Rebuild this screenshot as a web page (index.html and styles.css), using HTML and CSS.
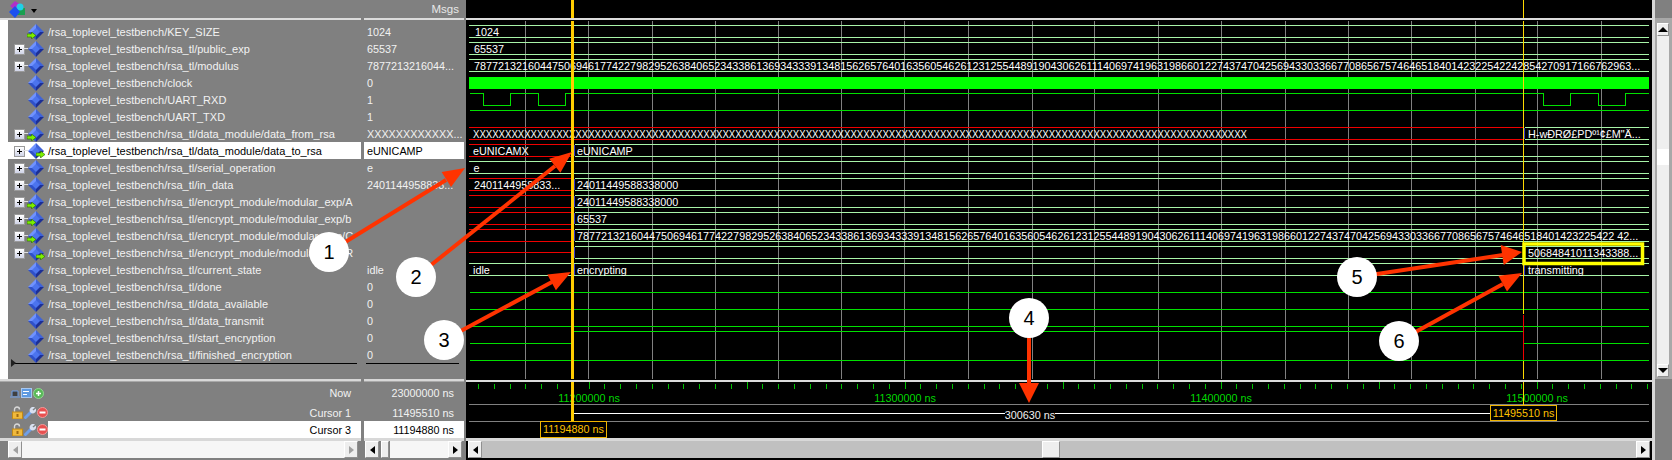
FILE: index.html
```html
<!DOCTYPE html>
<html lang="en">
<head>
<meta charset="utf-8">
<title>Wave</title>
<link rel="stylesheet" href="styles.css">
</head>
<body>
<svg class="defs" width="0" height="0" aria-hidden="true">
  <defs>
    <symbol id="dia" viewBox="0 0 16 16">
      <polygon points="8,0 16,8 8,8" fill="#3f63d8"/>
      <polygon points="8,0 0,8 8,8" fill="#6f92ff"/>
      <polygon points="0,8 8,16 8,8" fill="#2f50c8"/>
      <polygon points="16,8 8,16 8,8" fill="#1c2f96"/>
      <polygon points="8,4 12,8 8,12 4,8" fill="#4c74ee"/>
    </symbol>
    <symbol id="arr" viewBox="0 0 9 7">
      <polygon points="0,2 4.5,2 4.5,0 9,3.5 4.5,7 4.5,5 0,5" fill="#7cf000" stroke="#2a6a00" stroke-width=".6"/>
    </symbol>
    <symbol id="lock" viewBox="0 0 11 13">
      <path d="M2.5 6V3.5a2.5 2.5 0 0 1 5 0" fill="none" stroke="#d8d8d8" stroke-width="1.4"/>
      <rect x=".5" y="6" width="10" height="7" fill="#f0b93c" stroke="#c08a18"/>
      <rect x="4.5" y="8" width="2" height="3" fill="#a06c10"/>
    </symbol>
    <symbol id="wrench" viewBox="0 0 12 12">
      <path d="M1.5 10.5L7.500 4.500" stroke="#6f9fe8" stroke-width="3" stroke-linecap="round"/>
      <path d="M6 5a3.500 3.500 0 0 1 5-4.500L8.500 2.500l1 1L11.800 1.500a3.500 3.500 0 0 1-4.800 4.500z" fill="#d8e0f0"/>
    </symbol>
    <symbol id="minus" viewBox="0 0 11 11">
      <circle cx="5.500" cy="5.500" r="5" fill="#e85050" stroke="#f09a9a"/>
      <rect x="2.500" y="4.500" width="6" height="2" fill="#fff"/>
    </symbol>
  </defs>
</svg>

<div class="app">
  <section class="col names">
    <header class="head">
      <svg class="logo" width="18" height="17" viewBox="0 0 18 17" role="img" aria-label="wave">
        <rect x="8" y="7" width="8" height="7" fill="#1aa050"/>
        <polygon points="6,0 12,4 6,9 1,5" fill="#b030c8"/>
        <circle cx="11" cy="6" r="3.500" fill="#20d0e8"/>
        <polygon points="6,5 11,11 6,17 0,11" fill="#1c50f0"/>
      </svg>
      <i class="drop"></i>
    </header>
    <div class="sep"></div>
    <div class="list">
      <div class="row"><i class="tw"></i><span class="ic"><svg class="d"><use href="#dia"/></svg><svg class="ai"><use href="#arr"/></svg></span><span>/rsa_toplevel_testbench/KEY_SIZE</span></div>
      <div class="row"><i class="tw plus"></i><span class="ic"><svg class="d"><use href="#dia"/></svg></span><span>/rsa_toplevel_testbench/rsa_tl/public_exp</span></div>
      <div class="row"><i class="tw plus"></i><span class="ic"><svg class="d"><use href="#dia"/></svg></span><span>/rsa_toplevel_testbench/rsa_tl/modulus</span></div>
      <div class="row"><i class="tw"></i><span class="ic"><svg class="d"><use href="#dia"/></svg></span><span>/rsa_toplevel_testbench/clock</span></div>
      <div class="row"><i class="tw"></i><span class="ic"><svg class="d"><use href="#dia"/></svg></span><span>/rsa_toplevel_testbench/UART_RXD</span></div>
      <div class="row"><i class="tw"></i><span class="ic"><svg class="d"><use href="#dia"/></svg></span><span>/rsa_toplevel_testbench/UART_TXD</span></div>
      <div class="row"><i class="tw plus"></i><span class="ic"><svg class="d"><use href="#dia"/></svg><svg class="ai"><use href="#arr"/></svg></span><span>/rsa_toplevel_testbench/rsa_tl/data_module/data_from_rsa</span></div>
      <div class="row sel"><i class="tw plus"></i><span class="ic"><svg class="d"><use href="#dia"/></svg><svg class="ao"><use href="#arr"/></svg></span><span>/rsa_toplevel_testbench/rsa_tl/data_module/data_to_rsa</span></div>
      <div class="row"><i class="tw plus"></i><span class="ic"><svg class="d"><use href="#dia"/></svg></span><span>/rsa_toplevel_testbench/rsa_tl/serial_operation</span></div>
      <div class="row"><i class="tw plus"></i><span class="ic"><svg class="d"><use href="#dia"/></svg></span><span>/rsa_toplevel_testbench/rsa_tl/in_data</span></div>
      <div class="row"><i class="tw plus"></i><span class="ic"><svg class="d"><use href="#dia"/></svg><svg class="ai"><use href="#arr"/></svg></span><span>/rsa_toplevel_testbench/rsa_tl/encrypt_module/modular_exp/A</span></div>
      <div class="row"><i class="tw plus"></i><span class="ic"><svg class="d"><use href="#dia"/></svg><svg class="ai"><use href="#arr"/></svg></span><span>/rsa_toplevel_testbench/rsa_tl/encrypt_module/modular_exp/b</span></div>
      <div class="row"><i class="tw plus"></i><span class="ic"><svg class="d"><use href="#dia"/></svg><svg class="ai"><use href="#arr"/></svg></span><span>/rsa_toplevel_testbench/rsa_tl/encrypt_module/modular_exp/C</span></div>
      <div class="row"><i class="tw plus"></i><span class="ic"><svg class="d"><use href="#dia"/></svg><svg class="ao"><use href="#arr"/></svg></span><span>/rsa_toplevel_testbench/rsa_tl/encrypt_module/modular_exp/R</span></div>
      <div class="row"><i class="tw"></i><span class="ic"><svg class="d"><use href="#dia"/></svg></span><span>/rsa_toplevel_testbench/rsa_tl/current_state</span></div>
      <div class="row"><i class="tw"></i><span class="ic"><svg class="d"><use href="#dia"/></svg></span><span>/rsa_toplevel_testbench/rsa_tl/done</span></div>
      <div class="row"><i class="tw"></i><span class="ic"><svg class="d"><use href="#dia"/></svg></span><span>/rsa_toplevel_testbench/rsa_tl/data_available</span></div>
      <div class="row"><i class="tw"></i><span class="ic"><svg class="d"><use href="#dia"/></svg></span><span>/rsa_toplevel_testbench/rsa_tl/data_transmit</span></div>
      <div class="row"><i class="tw"></i><span class="ic"><svg class="d"><use href="#dia"/></svg></span><span>/rsa_toplevel_testbench/rsa_tl/start_encryption</span></div>
      <div class="row"><i class="tw"></i><span class="ic"><svg class="d"><use href="#dia"/></svg></span><span>/rsa_toplevel_testbench/rsa_tl/finished_encryption</span></div>
      <div class="endline"><i class="endmark"></i></div>
    </div>
    <div class="sep2"></div>
    <div class="cursors">
      <div class="crow now">
        <span class="tools">
          <svg width="10" height="10" viewBox="0 0 10 10"><path d="M0 9h10M2 8V3h6v5" fill="#404040" stroke="#6f9fe8"/></svg>
          <svg width="11" height="11" viewBox="0 0 11 11"><rect x=".5" y=".5" width="10" height="9" fill="#5f9ae0" stroke="#a8c8f0"/><rect x="2" y="3" width="6" height="1" fill="#fff"/><rect x="2" y="6" width="4" height="1" fill="#fff"/></svg>
          <svg width="11" height="11" viewBox="0 0 11 11"><circle cx="5.500" cy="5.500" r="5" fill="#58b858" stroke="#90d890"/><path d="M3 5.500h5M5.500 3v5" stroke="#fff" stroke-width="1.500"/></svg>
        </span>
        <span class="clabel">Now</span>
      </div>
      <div class="crow">
        <span class="tools"><svg class="tl"><use href="#lock"/></svg><svg class="tw2"><use href="#wrench"/></svg><svg class="tm"><use href="#minus"/></svg></span>
        <span class="clabel">Cursor 1</span>
      </div>
      <div class="crow">
        <span class="tools"><svg class="tl"><use href="#lock"/></svg><svg class="tw2"><use href="#wrench"/></svg><svg class="tm"><use href="#minus"/></svg></span>
        <span class="clabel on">Cursor 3</span>
      </div>
    </div>
    <div class="sep3"></div>
    <div class="hs hs-names"><b class="btn"><i class="la off"></i></b><span class="track"></span><b class="btn"><i class="ra off"></i></b></div>
  </section>

  <section class="col vals">
    <header class="head msgs">Msgs</header>
    <div class="sep"></div>
    <div class="list vlist">
      <div class="vrow">1024</div>
      <div class="vrow">65537</div>
      <div class="vrow">7877213216044...</div>
      <div class="vrow">0</div>
      <div class="vrow">1</div>
      <div class="vrow">1</div>
      <div class="vrow">XXXXXXXXXXXX...</div>
      <div class="vrow sel">eUNICAMP</div>
      <div class="vrow">e</div>
      <div class="vrow">2401144958833...</div>
      <div class="vrow"></div>
      <div class="vrow"></div>
      <div class="vrow"></div>
      <div class="vrow"></div>
      <div class="vrow">idle</div>
      <div class="vrow">0</div>
      <div class="vrow">0</div>
      <div class="vrow">0</div>
      <div class="vrow">0</div>
      <div class="vrow">0</div>
      <div class="endline"></div>
    </div>
    <div class="sep2"></div>
    <div class="cursors">
      <div class="crow now vc">23000000 ns</div>
      <div class="crow vc">11495510 ns</div>
      <div class="crow vc on">11194880 ns</div>
    </div>
    <div class="sep3"></div>
    <div class="hs hs-vals"><b class="btn"><i class="la"></i></b><b class="thumb"></b><span class="track"></span><b class="btn"><i class="ra"></i></b></div>
  </section>

  <section class="col wave">
    <svg class="canvas" width="1186" height="438" viewBox="466 0 1186 438" role="img" aria-label="waveform">
      <defs><clipPath id="wc"><rect x="469" y="21" width="1180" height="358"/></clipPath></defs>
      <path class="sepline" d="M466 19H1652M466 380.500H1652"/>
      <path class="grid" d="M525.500 21V379M588.500 21V379M652.500 21V379M715.500 21V379M778.500 21V379M841.500 21V379M904.500 21V379M968.500 21V379M1032.500 21V379M1094.500 21V379M1158.500 21V379M1221.500 21V379M1285.500 21V379M1348.500 21V379M1411.500 21V379M1475.500 21V379M1537.500 21V379M1601.500 21V379"/>
      <path class="bus" d="M469 25.500H1649M469 37.500H1649M469 42.500H1649M469 54.500H1649M469 59.500H1649M469 71.500H1649M1525 127.500H1649M1525 139.500H1649M575 144.500H1649M575 156.500H1649M469 161.500H1649M469 173.500H1649M575 178.500H1649M575 190.500H1649M575 195.500H1649M575 207.500H1649M575 212.500H1649M575 224.500H1649M575 229.500H1649M575 241.500H1649M575 246.500H1649M575 258.500H1649M469 263.500H1649M469 275.500H1649"/>
      <path class="xs" d="M469 127.500H1523M469 139.500H1523M469 144.500H571M469 156.500H571M469 178.500H571M469 190.500H571M469 195.500H571M469 207.500H571M469 212.500H571M469 224.500H571M469 229.500H571M469 241.500H571M469 252.500H571"/>
      <rect class="clk" x="469" y="77" width="1180" height="12"/>
      <path class="sig" d="M470 93.500H483.500V105.500H510.500V93.500H538.500V105.500H565.500V93.500H1543.500V105.500H1570.500V93.500H1598.500V105.500H1625.500V93.500H1649M470 110.500H1649M470 292.500H1649M470 309.500H1649M470 326.500H1649M470 343.500H573V331.500H1523V343.500H1649M470 360.500H1649"/>
      <g class="vt" clip-path="url(#wc)">
        <text x="475" y="36">1024</text>
        <text x="474" y="53">65537</text>
        <text x="474" y="70">7877213216044750694617742279829526384065234338613693433391348156265764016356054626123125544891904306261114069741963198660122743747042569433033667708656757464651840142322542242854270917166762963...</text>
        <text x="473" y="138" textLength="774" lengthAdjust="spacingAndGlyphs">XXXXXXXXXXXXXXXXXXXXXXXXXXXXXXXXXXXXXXXXXXXXXXXXXXXXXXXXXXXXXXXXXXXXXXXXXXXXXXXXXXXXXXXXXXXXXXXXXXXXXXXXXXXXXXXXXXXXXXXXX</text>
        <text x="1528" y="138">H-wÐRØ£PDº¹¢£M"Ä...</text>
        <text x="473" y="155">eUNICAMX</text>
        <text x="577" y="155">eUNICAMP</text>
        <text x="473.500" y="172">e</text>
        <text x="474" y="189">2401144958833...</text>
        <text x="577" y="189">24011449588338000</text>
        <text x="577" y="206">24011449588338000</text>
        <text x="577" y="223">65537</text>
        <text x="577" y="240">78772132160447506946177422798295263840652343386136934333913481562657640163560546261231255448919043062611140697419631986601227437470425694330336677086567574646518401423225422 42...</text>
        <text x="1528" y="257">50684841011343388...</text>
        <text x="473" y="274">idle</text>
        <text x="577" y="274">encrypting</text>
        <text x="1528" y="274">transmitting</text>
      </g>
      <path class="edge" d="M574.500 145V156M574.500 179V190M574.500 196V207M574.500 213V224M574.500 230V241M574.500 247V258M574.500 264V275M1524.500 128V139M1524.500 264V275"/>
      <path class="glitch" d="M1523.500 78V89M572.500 282V292M572.500 299V309M572.500 316V326M572.500 332V343M572.500 350V360M1523.500 315V360"/>
      <line class="tick" x1="478" y1="386.500" x2="1649" y2="386.500"/>
      <line class="major" x1="589" y1="385.500" x2="1649" y2="385.500"/>
      <path class="rule" d="M469 404.500H1649M469 421.500H1649"/>
      <g class="rt">
        <text x="589" y="402">11200000 ns</text>
        <text x="905" y="402">11300000 ns</text>
        <text x="1221" y="402">11400000 ns</text>
        <text x="1537" y="402">11500000 ns</text>
      </g>
      <path class="cur3" d="M572.500 0V18M572.500 21V379M572.500 382V421"/>
      <path class="cur1" d="M1523.500 0V18M1523.500 21V314M1523.500 361V379M1523.500 382V405"/>
      <path class="span" d="M574 413.500H1490"/>
      <rect class="spanbg" x="1005" y="407" width="50" height="13"/>
      <text class="spant" x="1030" y="419">300630 ns</text>
      <rect class="cbox" x="1490.500" y="405.500" width="66" height="15"/>
      <text class="ctext" x="1523.500" y="417">11495510 ns</text>
      <rect class="cbox" x="540.500" y="421.500" width="66" height="16"/>
      <text class="ctext" x="573.500" y="433">11194880 ns</text>
    </svg>
    <div class="sep3"></div>
    <div class="hs hs-wave"><b class="btn"><i class="la"></i></b><span class="gtrack"></span><b class="thumb big"></b><span class="gtrack"></span><b class="btn"><i class="ra"></i></b></div>
  </section>

  <aside class="col vs">
    <div class="vs-head"></div>
    <div class="vs-bar">
      <b class="vbtn"><i class="ua"></i></b>
      <span class="vtrack"></span>
      <b class="vthumb"></b>
      <span class="vtrack"></span>
      <b class="vbtn"><i class="da"></i></b>
    </div>
    <div class="vs-foot"></div>
  </aside>
</div>

<svg class="notes" width="1672" height="460" viewBox="0 0 1672 460" aria-hidden="false">
  <rect class="hl" x="1524" y="244" width="118.500" height="19.500"/>
  <g class="ar">
    <line x1="329" y1="252" x2="446" y2="180"/><polygon points="465,168 451,187 441.600,172"/>
    <line x1="416" y1="277" x2="555" y2="166"/><polygon points="572,152 560.400,172.800 549.200,158.800"/>
    <line x1="444" y1="340" x2="552" y2="282"/><polygon points="571,272 555.900,290.300 547.300,274.500"/>
    <line x1="1029" y1="318" x2="1029" y2="384"/><polygon points="1019,383 1039,383 1029,403"/>
    <line x1="1357" y1="277" x2="1503" y2="255"/><polygon points="1522,252 1503.700,264.900 1500.700,245.100"/>
    <line x1="1399" y1="341" x2="1503" y2="284"/><polygon points="1522,273 1507,291.500 1498.400,275.700"/>
  </g>
  <g class="bub">
    <circle cx="329" cy="252" r="20"/><circle cx="416" cy="277" r="20"/><circle cx="444" cy="340" r="20"/>
    <circle cx="1029" cy="318" r="20"/><circle cx="1357" cy="277" r="20"/><circle cx="1399" cy="341" r="20"/>
  </g>
  <g class="num">
    <text x="329" y="259">1</text><text x="416" y="284">2</text><text x="444" y="347">3</text>
    <text x="1029" y="325">4</text><text x="1357" y="284">5</text><text x="1399" y="348">6</text>
  </g>
</svg>
</body>
</html>
```

FILE: styles.css
```css
* { box-sizing: border-box; }
html, body { margin: 0; padding: 0; }
body {
  position: relative;
  width: 1672px;
  height: 460px;
  overflow: hidden;
  background: #808080;
  font: 11px "Liberation Sans", Arial, sans-serif;
  color: #f2f2f2;
}
i, b { display: block; font-style: normal; font-weight: 400; }
.defs { position: absolute; }

.app { display: flex; width: 1672px; height: 460px; }
.col { display: flex; flex-direction: column; height: 460px; flex: none; }
.names { width: 361px; }
.vals { width: 100px; margin-left: 3px; }
.wave { width: 1186px; margin-left: 2px; background: #000; }
.vs { width: 20px; }

.head { height: 18px; background: #808080; display: flex; align-items: center; flex: none; }
.logo { margin-left: 9px; }
.drop { margin: 3px 0 0 4px; border: 3.5px solid transparent; border-top: 4px solid #000; border-bottom: 0; }
.msgs { justify-content: flex-end; padding-right: 5px; font-size: 11.500px; color: #e8e8e8; }
.sep { height: 2px; background: #dcdcdc; flex: none; }
.sep2 { height: 3px; background: #d8d8d8; border-bottom: 1px solid #a8a8a8; flex: none; }
.sep3 { height: 3px; background: #d8d8d8; flex: none; }

.list { height: 359px; flex: none; padding-top: 3px; background: #808080; border-left: 8px solid #fff; position: relative; }
.vlist { border-left: 0; }
.row, .vrow { height: 17px; background: #808080; display: flex; align-items: center; white-space: nowrap; }
.row { font-size: 11px; }
.vrow { padding-left: 3px; font-size: 10.800px; }
.sel { background: #fff; color: #000; }
.tw { width: 20px; height: 9px; margin-left: 6px; position: relative; flex: none; }
.plus::before {
  content: "";
  position: absolute; left: 0; top: 0; width: 9px; height: 9px;
  background:
    linear-gradient(#000, #000) center / 5px 1px no-repeat,
    linear-gradient(#000, #000) center / 1px 5px no-repeat,
    linear-gradient(#ffffff, #d0d4e8);
  border: 1px solid #9a9a9a;
}
.plus::after { content: ""; position: absolute; left: 9px; top: 4px; width: 5px; height: 1px; background: #e0e0e0; }
.ic { width: 20px; height: 16px; position: relative; flex: none; margin-left: -6px; }
.d { position: absolute; left: 0; top: 0; width: 16px; height: 16px; }
.ai, .ao { position: absolute; width: 9px; height: 7px; top: 8px; }
.ai { left: -1px; }
.ao { left: 8px; }
.row span:last-child { flex: none; }

.endline { height: 1px; background: #000; margin: 0 4px 0 3px; position: relative; }
.vlist .endline { margin: 0 5px 0 2px; }
.endmark { position: absolute; left: 0; top: -4px; border: 4px solid transparent; border-left: 5px solid #202020; border-right: 0; }

.cursors { height: 56px; flex: none; background: #808080; display: flex; flex-direction: column; }
.crow { height: 17px; flex: none; display: flex; align-items: center; justify-content: space-between; font-size: 10.800px; }
.now { height: 22px; }
.tools { display: flex; align-items: center; gap: 1px; margin-left: 10px; width: 38px; flex: none; }
.tl { width: 11px; height: 13px; margin-left: 2px; }
.tw2 { width: 12px; height: 12px; }
.tm { width: 11px; height: 11px; }
.clabel { flex: 1; height: 100%; display: flex; align-items: center; justify-content: flex-end; padding-right: 10px; }
.on { background: #fff; color: #000; }
.vc { justify-content: flex-end; padding-right: 10px; }

.hs { height: 17px; display: flex; flex: none; }
.hs-names { margin-left: 8px; margin-right: 3px; }
.hs-vals { margin-left: 1px; margin-right: 2px; }
.hs-wave { margin: 0 2px 0 2px; }
.btn { width: 14px; height: 17px; flex: none; background: #eeeeee; border: 1px solid; border-color: #fff #909090 #909090 #fff; display: flex; align-items: center; justify-content: center; }
.track { flex: 1; background: #f6f6f6; }
.gtrack { background: #c0c0c0; }
.gtrack:nth-of-type(1) { flex: none; width: 560px; }
.gtrack:nth-of-type(2) { flex: 1; }
.thumb { width: 8px; margin: 0 1px 0 2px; background: #eeeeee; border: 1px solid; border-color: #fff #909090 #909090 #fff; flex: none; }
.big { width: 18px; margin: 0; }
.la, .ra { border: 4px solid transparent; }
.la { border-left: 0; border-right: 5px solid #000; }
.ra { border-right: 0; border-left: 5px solid #000; }
.la.off { border-right-color: #a0a0a0; }
.ra.off { border-left-color: #a0a0a0; }

.canvas { display: block; flex: none; background: #000; }
.sepline { stroke: #dcdcdc; stroke-width: 2; fill: none; shape-rendering: crispEdges; }
.grid { stroke: #808080; fill: none; shape-rendering: crispEdges; }
.bus { stroke: #a8f4a8; fill: none; shape-rendering: crispEdges; }
.xs { stroke: #f00000; fill: none; shape-rendering: crispEdges; }
.clk { fill: #00ff00; }
.sig { stroke: #00e000; fill: none; shape-rendering: crispEdges; }
.vt text { fill: #fff; font-size: 10.800px; }
.edge { stroke: #3838c8; fill: none; shape-rendering: crispEdges; }
.glitch { stroke: #f00000; fill: none; shape-rendering: crispEdges; }
.tick { stroke: #00c000; stroke-width: 5; stroke-dasharray: 1 14.800; shape-rendering: crispEdges; }
.major { stroke: #00c000; stroke-width: 7; stroke-dasharray: 1 157; shape-rendering: crispEdges; }
.rule { stroke: #808080; fill: none; shape-rendering: crispEdges; }
.rt text { fill: #00d800; font-size: 10.800px; text-anchor: middle; }
.cur3 { stroke: #ffcc00; stroke-width: 3; fill: none; shape-rendering: crispEdges; }
.cur1 { stroke: #ffd800; fill: none; shape-rendering: crispEdges; }
.span { stroke: #fff; fill: none; shape-rendering: crispEdges; }
.spanbg { fill: #000; }
.spant { fill: #f0f0f0; font-size: 10.800px; text-anchor: middle; }
.cbox { fill: #000; stroke: #f0b400; shape-rendering: crispEdges; }
.ctext { fill: #ffc000; font-size: 10.800px; text-anchor: middle; }

.vs-head { height: 18px; background: #808080; border-left: 3px solid #d8d8d8; flex: none; }
.vs-bar { height: 361px; flex: none; background: #a8a8a8; border-left: 3px solid #d8d8d8; padding: 5px 3px 2px 2px; display: flex; flex-direction: column; }
.vs-foot { flex: 1; background: #808080; border-left: 3px solid #d8d8d8; }
.vbtn { height: 13px; flex: none; background: #eeeeee; border: 1px solid; border-color: #fff #909090 #909090 #fff; display: flex; align-items: center; justify-content: center; }
.vtrack { background: #efefef; }
.vtrack:nth-of-type(1) { flex: none; height: 113px; }
.vtrack:nth-of-type(2) { flex: 1; }
.vthumb { height: 16px; flex: none; background: #fff; }
.ua, .da { border: 5px solid transparent; }
.ua { border-top: 0; border-bottom: 5px solid #000; }
.da { border-bottom: 0; border-top: 5px solid #000; }

.notes { position: absolute; left: 0; top: 0; pointer-events: none; }
.hl { fill: none; stroke: #ffff00; stroke-width: 3.500; }
.ar line { stroke: #ff3300; stroke-width: 4; }
.ar polygon { fill: #ff3300; }
.bub circle { fill: #fff; }
.num text { fill: #000; font: 20px "Liberation Sans", Arial, sans-serif; text-anchor: middle; }
```
